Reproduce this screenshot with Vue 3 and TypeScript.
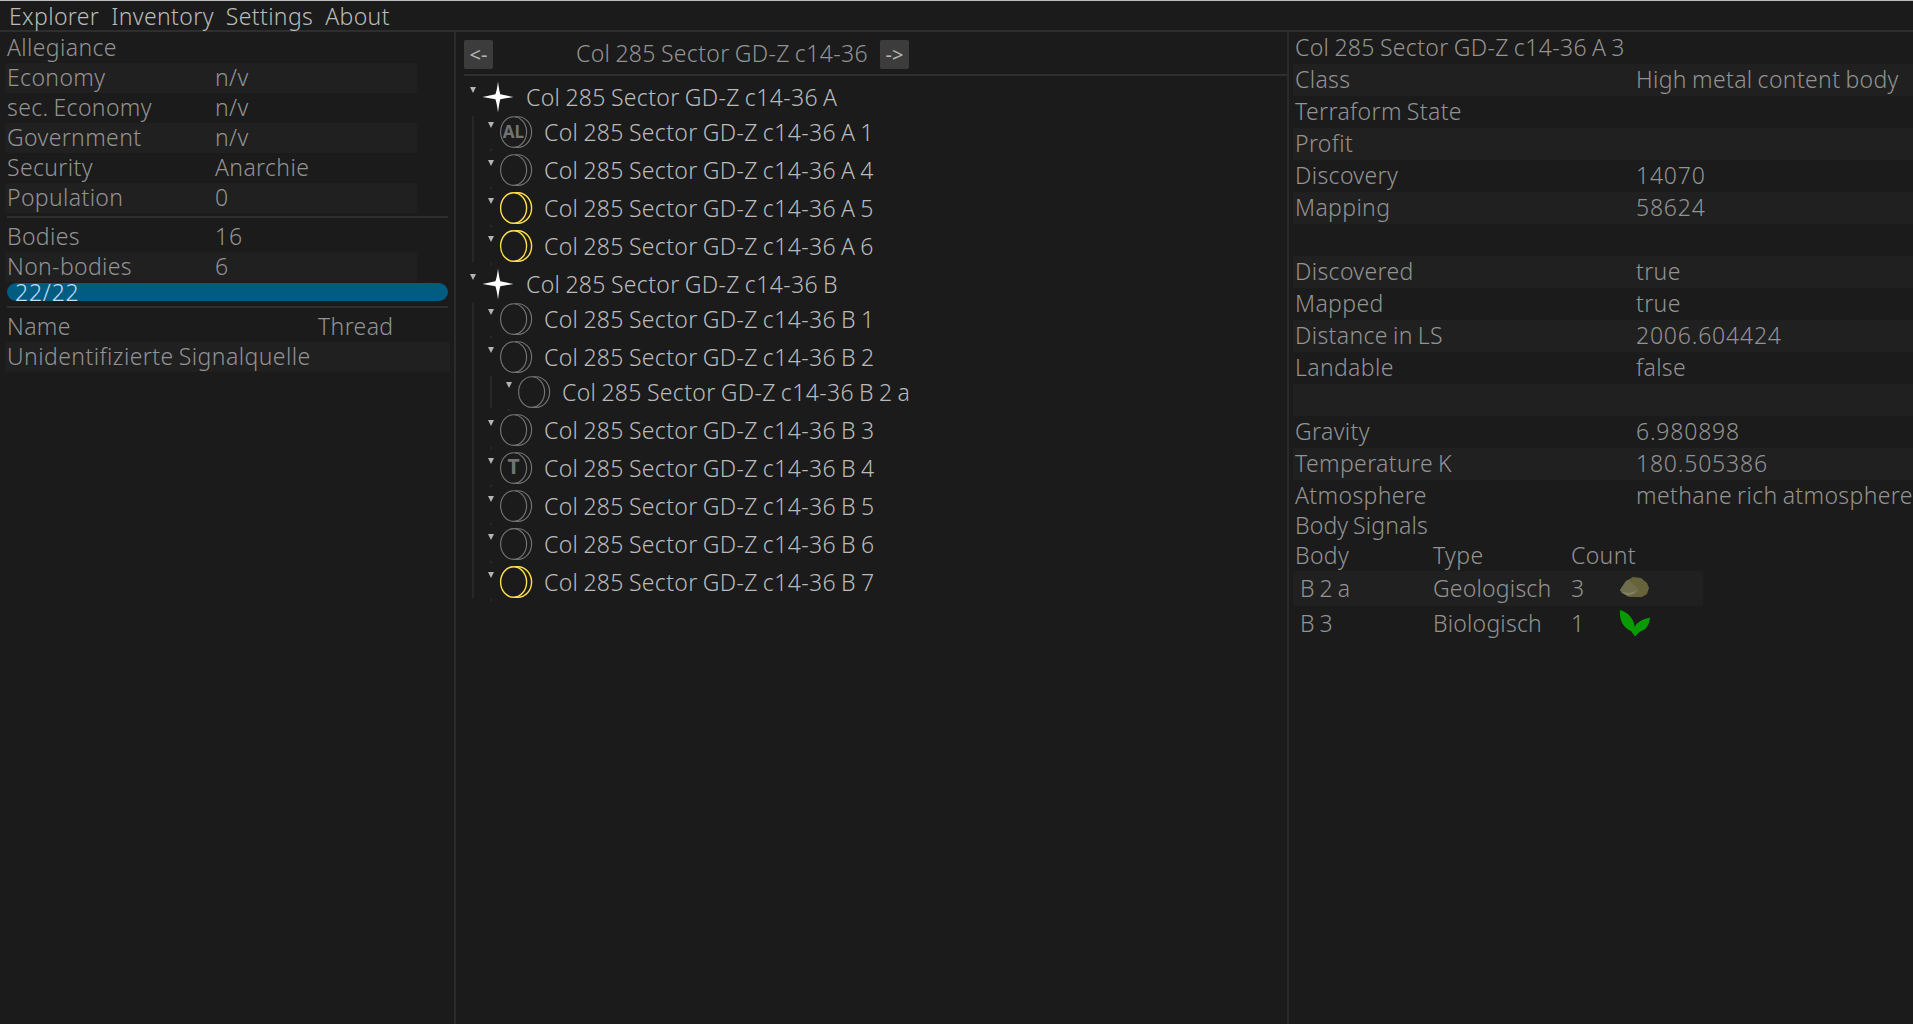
<script setup lang="ts">
interface Row { label: string; value?: string }
interface TreeNode { name: string; tag?: string; gold?: boolean; children?: TreeNode[] }

const menu = ['Explorer', 'Inventory', 'Settings', 'About']

const systemRows: Row[] = [
  { label: 'Allegiance' },
  { label: 'Economy', value: 'n/v' },
  { label: 'sec. Economy', value: 'n/v' },
  { label: 'Government', value: 'n/v' },
  { label: 'Security', value: 'Anarchie' },
  { label: 'Population', value: '0' },
]
const countRows: Row[] = [
  { label: 'Bodies', value: '16' },
  { label: 'Non-bodies', value: '6' },
]

const system = 'Col 285 Sector GD-Z c14-36'
const stars: TreeNode[] = [
  { name: 'A', children: [{ name: 'A 1', tag: 'AL' }, { name: 'A 4' }, { name: 'A 5', gold: true }, { name: 'A 6', gold: true }] },
  {
    name: 'B',
    children: [
      { name: 'B 1' },
      { name: 'B 2', children: [{ name: 'B 2 a' }] },
      { name: 'B 3' },
      { name: 'B 4', tag: 'T' },
      { name: 'B 5' },
      { name: 'B 6' },
      { name: 'B 7', gold: true },
    ],
  },
]

const bodyRows: Row[] = [
  { label: 'Class', value: 'High metal content body' },
  { label: 'Terraform State' },
  { label: 'Profit' },
  { label: 'Discovery', value: '14070' },
  { label: 'Mapping', value: '58624' },
  { label: '' },
  { label: 'Discovered', value: 'true' },
  { label: 'Mapped', value: 'true' },
  { label: 'Distance in LS', value: '2006.604424' },
  { label: 'Landable', value: 'false' },
  { label: '' },
  { label: 'Gravity', value: '6.980898' },
  { label: 'Temperature K', value: '180.505386' },
  { label: 'Atmosphere', value: 'methane rich atmosphere' },
]
const signals = [
  { body: 'B 2 a', type: 'Geologisch', count: 3, geo: true },
  { body: 'B 3', type: 'Biologisch', count: 1, geo: false },
]
const isNumber = (v?: string) => !!v && /^[\d.]+$/.test(v)
</script>

<template>
  <div class="app">
    <nav class="menu">
      <span v-for="m in menu" :key="m">{{ m }}</span>
    </nav>
    <div class="panels">
      <aside class="left">
        <div class="grid">
          <div v-for="r in systemRows" :key="r.label" class="row">
            <span class="label">{{ r.label }}</span><span>{{ r.value }}</span>
          </div>
        </div>
        <hr class="sep first" />
        <div class="grid">
          <div v-for="r in countRows" :key="r.label" class="row">
            <span class="label">{{ r.label }}</span><span class="num">{{ r.value }}</span>
          </div>
        </div>
        <div class="progress"><span class="num">22/22</span></div>
        <hr class="sep second" />
        <div class="grid wide">
          <div class="row"><span class="label">Name</span><span>Thread</span></div>
          <div class="row"><span class="label signal-name">Unidentifizierte Signalquelle</span></div>
        </div>
      </aside>

      <main class="center">
        <header class="nav">
          <button>&lt;-</button>
          <span class="title">{{ system }}</span>
          <button>-&gt;</button>
        </header>
        <hr class="sep nav-sep" />
        <div class="tree">
          <section v-for="s in stars" :key="s.name" class="node">
            <div class="head">
              <svg class="tri" viewBox="0 0 6 6"><path d="M0 0H6L3 6Z" /></svg>
              <svg class="star" viewBox="0 0 32 32"><path d="M16 0.5Q17 9 18.3 13.3L31.5 16L18.3 18.3Q17 23 16 31.5Q15 23 13.4 18.3L0.5 16L13.4 13.3Q15 9 16 0.5Z" /></svg>
              <span class="name">{{ system }} {{ s.name }}</span>
            </div>
            <div class="children">
              <section v-for="b in s.children" :key="b.name" class="node">
                <div class="head">
                  <svg class="tri" viewBox="0 0 6 6"><path d="M0 0H6L3 6Z" /></svg>
                  <svg class="body" :class="{ gold: b.gold }" viewBox="0 0 32 32">
                    <ellipse cx="13.6" cy="16" rx="13" ry="15.3" />
                    <path d="M15 0.7H18A13.6 15.3 0 0 1 18 31.3H15" />
                    <text v-if="b.tag" x="13.5" y="22" :class="{ single: b.tag.length === 1 }">{{ b.tag }}</text>
                  </svg>
                  <span class="name">{{ system }} {{ b.name }}</span>
                </div>
                <div v-if="b.children" class="children">
                  <section v-for="m in b.children" :key="m.name" class="node">
                    <div class="head">
                      <svg class="tri" viewBox="0 0 6 6"><path d="M0 0H6L3 6Z" /></svg>
                      <svg class="body" viewBox="0 0 32 32">
                        <ellipse cx="13.6" cy="16" rx="13" ry="15.3" />
                        <path d="M15 0.7H18A13.6 15.3 0 0 1 18 31.3H15" />
                      </svg>
                      <span class="name">{{ system }} {{ m.name }}</span>
                    </div>
                    <i class="dot"></i>
                  </section>
                </div>
                <i v-else class="dot"></i>
              </section>
            </div>
          </section>
        </div>
      </main>

      <aside class="right">
        <div class="row heading">{{ system }} A 3</div>
        <div class="details">
          <div v-for="(r, i) in bodyRows" :key="i" class="row">
            <span class="label">{{ r.label }}</span><span :class="{ num: isNumber(r.value) }">{{ r.value }}</span>
          </div>
        </div>
        <div class="row signals-title">Body Signals</div>
        <div class="signals">
          <div class="row signals-head"><span>Body</span><span>Type</span><span>Count</span></div>
          <div v-for="s in signals" :key="s.body" class="row signal">
            <span class="sbody">{{ s.body }}</span><span>{{ s.type }}</span><span>{{ s.count }}</span>
            <svg v-if="s.geo" viewBox="0 0 32 32">
              <path fill="#66633a" d="M1 17L7 8L14 4L22 5L28 10L30 15L28 21L23 24L10 24L3 20Z" />
              <path fill="#6f6d4c" d="M1 17L7 8L10 7L20 17L18 20L10 23L3 20Z" />
              <path fill="#858466" d="M3 19L10 20L18 18L14 21L8 22.5Z" />
            </svg>
            <svg v-else viewBox="0 0 32 32">
              <path fill="#0a9a04" d="M1 2C10 5 15 11 15.7 19C18 14 24 11 31 9.5C30.5 17 27 22 21 23.5L16 28.5L12 23C5 20 0 13 1 2Z" />
            </svg>
          </div>
        </div>
      </aside>
    </div>
  </div>
</template>

<style>
body { background: #1b1b1b; overflow: hidden; }
</style>

<style scoped>
.app {
  width: 1913px;
  height: 1024px;
  box-sizing: border-box;
  border-top: 1px solid #b9bdbc;
  display: flex;
  flex-direction: column;
  background: #1b1b1b;
  color: #939393;
  font: 350 23px/30px "Noto Sans", "Open Sans", sans-serif;
  letter-spacing: 0.36px;
  word-spacing: -1.3px;
  white-space: nowrap;
  overflow: hidden;
}
.num { letter-spacing: 0.8px; }
.menu {
  flex: none;
  display: flex;
  gap: 12px;
  height: 29px;
  padding-left: 9px;
  line-height: 31px;
  color: #bababa;
  border-bottom: 2px solid #2e2e2e;
}
.panels { flex: 1; display: flex; min-height: 0; }
.left { width: 454px; flex: none; border-right: 2px solid #2b2b2b; }
.row { display: flex; height: 30px; }
.grid { width: 412px; margin-left: 5px; }
.grid .row { padding-left: 2px; border-radius: 2px; line-height: 28px; }
.grid .row:nth-child(even) { background: #202020; }
.grid .label { width: 208px; flex: none; }
.grid .signal-name { letter-spacing: 0.43px; }
.left > .grid:first-child { padding-top: 1px; }
.grid.wide { width: 445px; }
.wide .label { width: 311px; }
.sep { border: 0; height: 2px; background: #2e2e2e; margin: 0; }
.left .sep { width: 441px; margin-left: 7px; }
.left .first { margin-top: 3px; margin-bottom: 4px; }
.left .second { margin-top: 5px; margin-bottom: 4px; }
.progress {
  width: 433px;
  height: 18px;
  margin: 1px 0 0 7px;
  padding-left: 8px;
  border-radius: 9px;
  background: #005c80;
  color: #c0deff;
  line-height: 18px;
}
.center { width: 823px; flex: none; padding-left: 8px; border-right: 2px solid #2b2b2b; }
.nav { display: flex; padding-top: 8px; height: 34px; }
button {
  width: 29px;
  height: 29px;
  padding: 0;
  border: 0;
  border-radius: 2px;
  background: #3c3c3c;
  color: #b4b4b4;
  font: 400 20px/29px "Noto Sans", sans-serif;
}
.title { width: 291px; margin: 0 13px 0 83px; line-height: 27px; }
.tree { padding-top: 5px; color: #bababa; }
.node { position: relative; }
.node + .node { margin-top: 6px; }
.head { display: flex; height: 32px; }
.tri { width: 6px; height: 6px; margin: 6px 0 0 6px; fill: #b4b4b4; }
.star { width: 32px; height: 32px; margin-left: 6px; fill: #fff; }
.body { width: 32px; height: 32px; margin-left: 6px; fill: none; stroke: #747474; stroke-width: 1.15; overflow: visible; }
.body text { font: 700 17px "Noto Sans", sans-serif; letter-spacing: 0; fill: #737373; stroke: none; text-anchor: middle; }
.body .single { font-size: 21px; }
.body.gold { stroke: #ffe04a; stroke-width: 1.4; }
.name { margin-left: 12px; line-height: 33px; }
.children { margin: 3px 0 0 8px; padding-left: 8px; border-left: 2px solid #282828; }
.dot { position: absolute; left: 8px; top: 33px; width: 2px; height: 2px; background: #282828; }
.right { flex: 1; min-width: 0; padding-left: 4px; }
.heading { height: 32px; padding-left: 2px; line-height: 31px; }
.details .row { height: 32px; line-height: 30px; padding-left: 2px; }
.details .row:nth-child(odd) { background: #202020; }
.details .label { width: 341px; flex: none; }
.signals-title { padding-left: 2px; line-height: 26px; letter-spacing: 0.15px; }
.signals .row { display: grid; grid-template-columns: 138px 138px 48px 32px; width: 408px; padding-left: 2px; border-radius: 2px; }
.signals .signals-head { height: 29px; line-height: 26px; }
.signals .signal { height: 35px; line-height: 35px; letter-spacing: 0.2px; }
.signals .signal:nth-child(2) { background: #202020; }
.sbody { padding-left: 5px; }
.signal svg { width: 32px; height: 32px; margin-top: 2px; }
</style>
